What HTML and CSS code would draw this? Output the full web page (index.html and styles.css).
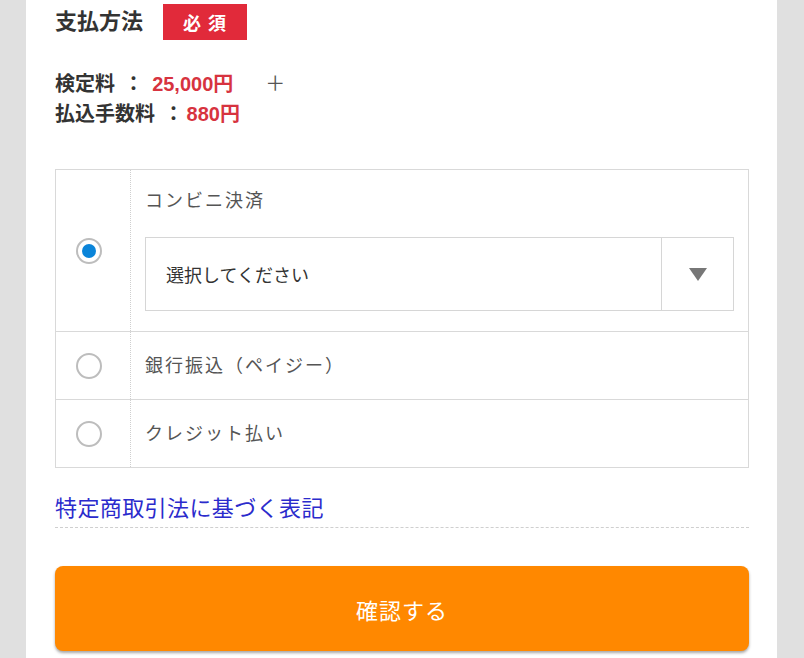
FILE: index.html
```html
<!DOCTYPE html>
<html lang="ja">
<head>
<meta charset="utf-8">
<title>支払方法</title>
<link rel="stylesheet" href="styles.css">
</head>
<body>
<main class="panel">
  <div class="title-row">
    <h2 class="title">支払方法</h2>
    <span class="badge">必 須</span>
  </div>
  <div class="fees">
    <p class="fee">検定料 <span class="colon">：</span> <span class="price">25,000円</span><span class="plus">＋</span></p>
    <p class="fee">払込手数料 <span class="colon">：</span><span class="price">880円</span></p>
  </div>

  <div class="methods">
    <div class="method method-first">
      <div class="radio-cell"><span class="radio checked"></span></div>
      <div class="label-cell">
        <div class="label">コンビニ決済</div>
        <div class="select">
          <span class="select-text">選択してください</span>
          <span class="select-arrow"><span class="tri"></span></span>
        </div>
      </div>
    </div>
    <div class="method">
      <div class="radio-cell"><span class="radio"></span></div>
      <div class="label-cell"><div class="label">銀行振込（ペイジー）</div></div>
    </div>
    <div class="method">
      <div class="radio-cell"><span class="radio"></span></div>
      <div class="label-cell"><div class="label">クレジット払い</div></div>
    </div>
  </div>

  <div class="law"><a class="law-link" href="#">特定商取引法に基づく表記</a></div>

  <button class="confirm" type="button">確認する</button>
</main>
</body>
</html>
```

FILE: styles.css
```css
html, body {
  margin: 0;
  padding: 0;
}
body {
  background: #e0e0e0;
  font-family: "Liberation Sans", "Noto Sans CJK JP", sans-serif;
  color: #333;
}
.panel {
  display: block;
  width: 694px;
  margin-left: 26px;
  padding: 4px 28px 20px 29px;
  background: #fff;
  min-height: 640px;
}
.title-row {
  display: flex;
  align-items: center;
  gap: 20px;
  height: 36px;
}
.title {
  margin: 0;
  font-size: 22px;
  font-weight: bold;
  color: #333;
  line-height: 36px;
}
.badge {
  display: inline-flex;
  align-items: center;
  justify-content: center;
  width: 84px;
  height: 36px;
  background: #e12a3a;
  color: #fff;
  font-weight: bold;
  font-size: 18px;
  letter-spacing: 1px;
}
.fees {
  margin-top: 29px;
}
.fee {
  margin: 0;
  font-size: 20px;
  font-weight: bold;
  line-height: 30px;
  color: #333;
}
.colon {
  margin: 0 3px 0 3px;
}
.price {
  color: #d7333f;
}
.plus {
  font-weight: normal;
  color: #555;
  margin-left: 32px;
}
.methods {
  margin-top: 40px;
  border: 1px solid #d9d9d9;
}
.method {
  display: flex;
  border-top: 1px solid #d9d9d9;
  min-height: 67px;
}
.method-first {
  border-top: none;
  min-height: 161px;
}
.radio-cell {
  width: 75px;
  flex: none;
  display: flex;
  align-items: center;
  padding-left: 20px;
  box-sizing: border-box;
  border-right: 1px dotted #cfcfcf;
}
.radio {
  display: block;
  width: 22px;
  height: 22px;
  border: 2px solid #bdbdbd;
  border-radius: 50%;
  box-sizing: content-box;
  position: relative;
  background: #fff;
}
.radio.checked::after {
  content: "";
  position: absolute;
  left: 4px;
  top: 4px;
  width: 14px;
  height: 14px;
  border-radius: 50%;
  background: #0a84d9;
}
.label-cell {
  flex: 1;
  display: flex;
  flex-direction: column;
  justify-content: center;
  padding: 0 14px;
}
.method-first .label-cell {
  justify-content: flex-start;
  padding-top: 17px;
  padding-bottom: 20px;
}
.label {
  font-size: 18px;
  letter-spacing: 2px;
  line-height: 28px;
  color: #555;
}
.select {
  margin-top: 22px;
  display: flex;
  height: 72px;
  border: 1px solid #d6d6d6;
}
.select-text {
  flex: 1;
  display: flex;
  align-items: center;
  padding-left: 20px;
  font-size: 18px;
  color: #333;
}
.select-arrow {
  width: 71px;
  flex: none;
  border-left: 1px solid #d6d6d6;
  display: flex;
  align-items: center;
  justify-content: center;
}
.tri {
  width: 0;
  height: 0;
  border-left: 9px solid transparent;
  border-right: 9px solid transparent;
  border-top: 13px solid #777;
}
.law {
  margin-top: 26px;
  border-bottom: 1px dashed #cfcfcf;
  padding-bottom: 3px;
}
.law-link {
  font-size: 22px;
  letter-spacing: 0.4px;
  line-height: 30px;
  color: #2b2bcc;
  text-decoration: none;
}
.confirm {
  display: block;
  margin-top: 38px;
  width: 100%;
  height: 85px;
  border: none;
  border-radius: 8px;
  background: #ff8800;
  color: #fff;
  font-family: "Liberation Sans", "Noto Sans CJK JP", sans-serif;
  font-size: 22px;
  letter-spacing: 1px;
  box-shadow: 0 2px 3px rgba(0, 0, 0, 0.35);
  cursor: pointer;
}
```
